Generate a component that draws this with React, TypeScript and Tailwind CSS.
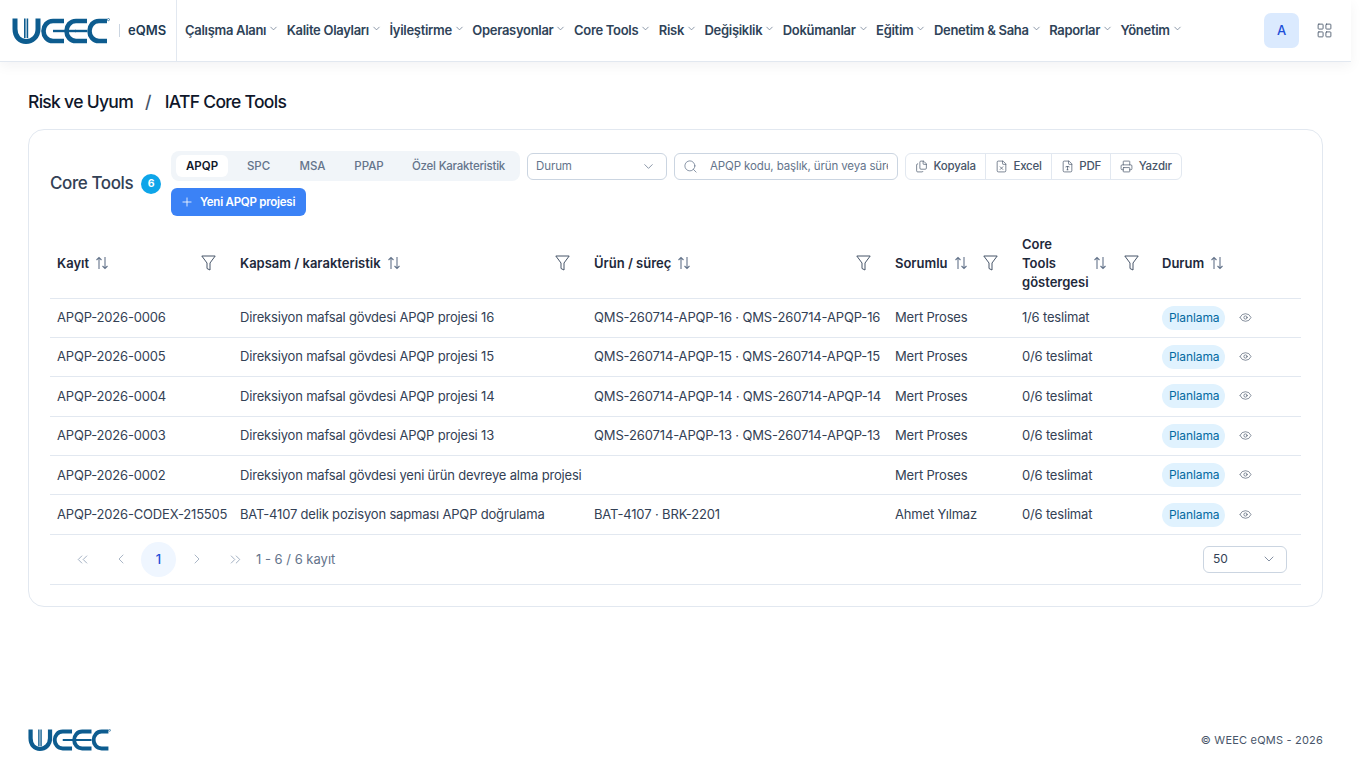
import React from "react";
import { ChevronDown, ChevronLeft, ChevronRight, ChevronsLeft, ChevronsRight, Eye, LayoutGrid, Plus, Printer, Search, Files, FileX, FileType } from "lucide-react";

const nav = ["Çalışma Alanı", "Kalite Olayları", "İyileştirme", "Operasyonlar", "Core Tools", "Risk", "Değişiklik", "Dokümanlar", "Eğitim", "Denetim & Saha", "Raporlar", "Yönetim"];
const rows = [
  ["APQP-2026-0006", "Direksiyon mafsal gövdesi APQP projesi 16", "QMS-260714-APQP-16 · QMS-260714-APQP-16", "Mert Proses", "1/6 teslimat"],
  ["APQP-2026-0005", "Direksiyon mafsal gövdesi APQP projesi 15", "QMS-260714-APQP-15 · QMS-260714-APQP-15", "Mert Proses", "0/6 teslimat"],
  ["APQP-2026-0004", "Direksiyon mafsal gövdesi APQP projesi 14", "QMS-260714-APQP-14 · QMS-260714-APQP-14", "Mert Proses", "0/6 teslimat"],
  ["APQP-2026-0003", "Direksiyon mafsal gövdesi APQP projesi 13", "QMS-260714-APQP-13 · QMS-260714-APQP-13", "Mert Proses", "0/6 teslimat"],
  ["APQP-2026-0002", "Direksiyon mafsal gövdesi yeni ürün devreye alma projesi", "", "Mert Proses", "0/6 teslimat"],
  ["APQP-2026-CODEX-215505", "BAT-4107 delik pozisyon sapması APQP doğrulama", "BAT-4107 · BRK-2201", "Ahmet Yılmaz", "0/6 teslimat"],
];

function Logo({ className }: { className: string }) {
  const c = "#0d5c8f";
  return (
    <svg viewBox="0 0 98 26" className={className} fill="none" stroke={c}>
      <path d="M3 0.5V11C3 19 8 23.5 14 23.5C20 23.5 26 19 26 11V0.5" strokeWidth="5" />
      <path d="M12.8 0.5V20M15.4 0.5V20" strokeWidth="1.6" />
      <path d="M52 3H41C35 3 31.5 8 31.5 13C31.5 18 35 23 41 23H52" strokeWidth="4.6" />
      <path d="M41 13H64" strokeWidth="2.4" />
      <path d="M75 3H64C58 3 54.5 8 54.5 13C54.5 18 58 23 64 23H75" strokeWidth="4.6" />
      <path d="M63 13H75" strokeWidth="2.4" />
      <path d="M95 3H87C81 3 77.5 8 77.5 13C77.5 18 81 23 87 23H95" strokeWidth="4.6" />
      <circle cx="96.4" cy="1.6" r="1.1" strokeWidth="0.7" />
    </svg>
  );
}

function SortIcon() {
  return (
    <svg viewBox="0 0 14 14" className="w-[14px] h-[14px] shrink-0 text-[#64748b]" fill="none" stroke="currentColor" strokeWidth="1.1">
      <path d="M4 13V1.5M1.5 4L4 1.5L6.5 4M10 1V12.5M7.5 10L10 12.5L12.5 10" />
    </svg>
  );
}

function FunnelIcon() {
  return (
    <svg viewBox="0 0 15 16" className="w-[15px] h-[16px] shrink-0 text-[#475569]" fill="none" stroke="currentColor" strokeWidth="1" strokeLinejoin="round">
      <path d="M0.8 1H14.2L9 8V15L6 13.5V8Z" />
    </svg>
  );
}

function Head({ label, filter, w, wrap }: { label: React.ReactNode; filter?: boolean; w: string; wrap?: boolean }) {
  return (
    <th className={`${w} p-0 pb-[2px] pl-[7px] ${wrap ? "pr-[16px]" : filter ? "pr-[17px]" : "pr-[7px]"} text-left font-semibold text-[13px] leading-[19px] text-[#1e293b]`}>
      <div className="flex items-center justify-between">
        <div className={`flex items-center ${wrap ? "gap-[4px]" : "gap-[6px]"}`}>
          <span>{label}</span>
          <SortIcon />
        </div>
        {filter && <span className={wrap ? "ml-[17px]" : "ml-2"}><FunnelIcon /></span>}
      </div>
    </th>
  );
}

function ToolBtn({ icon, label, last }: { icon: React.ReactNode; label: string; last?: boolean }) {
  return (
    <div className={`h-full flex items-center gap-[5.5px] px-[9px] text-[11.5px] font-medium tracking-[-0.2px] text-[#475569] ${last ? "" : "border-r border-[#e2e8f0]"}`}>
      {icon}
      <span className="pt-[1px]">{label}</span>
    </div>
  );
}

export default function App() {
  return (
    <div className="pr-[15px] min-h-screen bg-white text-[#334155]" style={{ fontFamily: "Inter, 'Liberation Sans', sans-serif" }}>
      <div className="min-h-screen flex flex-col">
        <header className="h-[62px] shrink-0 flex items-stretch border-b border-[#e2e8f0] shadow-[0_4px_12px_rgba(15,23,42,0.05)]">
          <div className="w-[177px] shrink-0 flex items-center border-r border-[#e2e8f0] pl-[12px]">
            <Logo className="w-[98px] h-[26px]" />
            <div className="w-px h-[13px] bg-[#cbd5e1] ml-[9px]" />
            <span className="ml-[8px] text-[13px] font-semibold text-[#1e3a52]">eQMS</span>
          </div>
          <nav className="flex items-center pl-[8px] flex-1 gap-[6.5px]">
            {nav.map((n) => (
              <div key={n} className="flex items-center gap-[2px]">
                <span className="text-[13px] font-semibold tracking-[-0.3px] text-[#2f4358] whitespace-nowrap">{n}</span>
                <ChevronDown strokeWidth={1.6} className="w-[11px] h-[11px] text-[#64748b] -mt-[5px] mr-[1px]" />
              </div>
            ))}
          </nav>
          <div className="flex items-center pr-[18px] gap-[17px]">
            <div className="w-[35px] h-[35px] rounded-[7px] bg-[#dbeafe] text-[#1d4ed8] text-[13px] font-medium flex items-center justify-center">A</div>
            <LayoutGrid strokeWidth={1.2} className="w-[17px] h-[17px] text-[#475569]" />
          </div>
        </header>

        <main className="flex-1 px-[28px]">
          <div className="pt-[13px] h-[67px] flex items-center gap-[12px] text-[17.5px] font-medium text-[#0f172a] tracking-[-0.7px]">
            <span>Risk ve Uyum</span>
            <span className="text-[#475569]">/</span>
            <span className="ml-[2px]">IATF Core Tools</span>
          </div>
          <section className="border border-[#e2e8f0] rounded-[16px] h-[478px] px-[21px] pt-[21px]">
            <div className="flex items-center h-[65px]">
              <div className="w-[121px] shrink-0 flex items-center gap-[8px]">
                <span className="text-[17px] font-medium text-[#334155] tracking-[-0.4px]">Core Tools</span>
                <span className="w-[20px] h-[20px] rounded-full bg-[#0ea5e9] text-white text-[10.5px] font-bold flex items-center justify-center">6</span>
              </div>
              <div className="flex flex-wrap items-center gap-x-[7px] gap-y-[7px] w-[1030px]">
                <div className="h-[30px] w-[349px] rounded-[8px] bg-[#f1f5f9] flex items-center pl-[5px] text-[11.5px] font-medium text-[#64748b]">
                  <span className="h-[22px] w-[52px] pt-[1px] rounded-[6px] bg-white text-[#0f172a] font-semibold flex items-center justify-center">APQP</span>
                  <span className="w-[61px] pt-[1px] text-center">SPC</span>
                  <span className="w-[47px] pt-[1px] text-center">MSA</span>
                  <span className="w-[66px] pt-[1px] text-center">PPAP</span>
                  <span className="w-[113px] pt-[1px] text-center tracking-[-0.22px] whitespace-nowrap">Özel Karakteristik</span>
                </div>
                <div className="h-[27px] w-[140px] rounded-[6px] border border-[#cbd5e1] flex items-center justify-between pl-[8px] pr-[10px] text-[11.5px] tracking-[-0.1px] text-[#64748b]">
                  <span className="pt-[1px]">Durum</span>
                  <ChevronDown strokeWidth={1.2} className="w-[15px] h-[15px] text-[#64748b]" />
                </div>
                <div className="h-[27px] w-[224px] rounded-[6px] border border-[#cbd5e1] flex items-center pl-[8px] pr-[9px] text-[11.5px] tracking-[-0.12px] text-[#64748b] overflow-hidden">
                  <Search strokeWidth={1.2} className="w-[15px] h-[15px] shrink-0 text-[#64748b] mr-[12px]" />
                  <span className="pt-[1px] whitespace-nowrap overflow-hidden">APQP kodu, başlık, ürün veya süreç</span>
                </div>
                <div className="h-[27px] w-[277px] rounded-[6px] border border-[#e2e8f0] flex items-center">
                  <ToolBtn icon={<Files strokeWidth={1.3} className="w-[13px] h-[13px]" />} label="Kopyala" />
                  <ToolBtn icon={<FileX strokeWidth={1.3} className="w-[13px] h-[13px]" />} label="Excel" />
                  <ToolBtn icon={<FileType strokeWidth={1.3} className="w-[13px] h-[13px]" />} label="PDF" />
                  <ToolBtn icon={<Printer strokeWidth={1.3} className="w-[13px] h-[13px]" />} label="Yazdır" last />
                </div>
                <div className="h-[28px] w-[135px] rounded-[6px] bg-[#3b82f6] text-white text-[11.5px] font-semibold tracking-[-0.25px] flex items-center pl-[9px] gap-[6px]">
                  <Plus strokeWidth={1.4} className="w-[14px] h-[14px]" />
                  <span className="pt-[1px]">Yeni APQP projesi</span>
                </div>
              </div>
            </div>
            <table className="mt-[15px] w-[1251px] table-fixed border-collapse">
              <thead>
                <tr className="h-[67px] border-b border-[#e2e8f0]">
                  <Head label="Kayıt" filter w="w-[183px]" />
                  <Head label="Kapsam / karakteristik" filter w="w-[354px]" />
                  <Head label="Ürün / süreç" filter w="w-[301px]" />
                  <Head label="Sorumlu" filter w="w-[127px]" />
                  <Head label={<>Core<br />Tools<br />göstergesi</>} filter wrap w="w-[140px]" />
                  <Head label="Durum" w="w-[146px]" />
                </tr>
              </thead>
              <tbody>
                {rows.map((r) => (
                  <tr key={r[0]} className="h-[39.4px] border-b border-[#e2e8f0] text-[13px] tracking-[-0.18px] text-[#334155]">
                    {r.map((c, i) => (
                      <td key={i} className={`px-[7px] p-0 whitespace-nowrap ${i === 2 ? "tracking-[-0.14px]" : ""}`}>{c}</td>
                    ))}
                    <td className="pl-[7px]">
                      <div className="flex items-center gap-[14px]">
                        <span className="h-[24px] pl-[7px] pr-[5px] rounded-[12px] bg-[#e0f2fe] text-[#0369a1] text-[12px] tracking-[-0.1px] flex items-center">Planlama</span>
                        <Eye strokeWidth={1.2} className="w-[13px] h-[13px] text-[#475569] -mt-[1px]" />
                      </div>
                    </td>
                  </tr>
                ))}
              </tbody>
            </table>
            <div className="h-[50px] border-b border-[#e2e8f0] flex items-center justify-between pl-[15px] pr-[14px]">
              <div className="flex items-center text-[#94a3b8]">
                <span className="w-[35px] flex justify-center"><ChevronsLeft strokeWidth={1.2} className="w-[17px] h-[17px]" /></span>
                <span className="w-[41px] flex justify-center"><ChevronLeft strokeWidth={1.2} className="w-[16px] h-[16px]" /></span>
                <span className="w-[35px] h-[35px] rounded-full bg-[#eff6ff] text-[#1d4ed8] text-[13px] font-medium flex items-center justify-center">1</span>
                <span className="w-[42px] flex justify-center"><ChevronRight strokeWidth={1.2} className="w-[16px] h-[16px]" /></span>
                <span className="w-[35px] flex justify-center"><ChevronsRight strokeWidth={1.2} className="w-[17px] h-[17px]" /></span>
                <span className="ml-[3px] text-[13px] text-[#64748b]">1 - 6 / 6 kayıt</span>
              </div>
              <div className="w-[84px] h-[27px] rounded-[6px] border border-[#cbd5e1] flex items-center justify-between pl-[9px] pr-[9px] text-[12px] text-[#334155]">
                50
                <ChevronDown strokeWidth={1.2} className="w-[16px] h-[16px] text-[#64748b]" />
              </div>
            </div>
          </section>
        </main>

        <footer className="h-[76px] shrink-0 pt-[20px] px-[28px] flex items-center justify-between">
          <Logo className="w-[83px] h-[22px]" />
          <span className="text-[11px] text-[#475569] tracking-[0.2px]">© WEEC eQMS - 2026</span>
        </footer>
      </div>
    </div>
  );
}
